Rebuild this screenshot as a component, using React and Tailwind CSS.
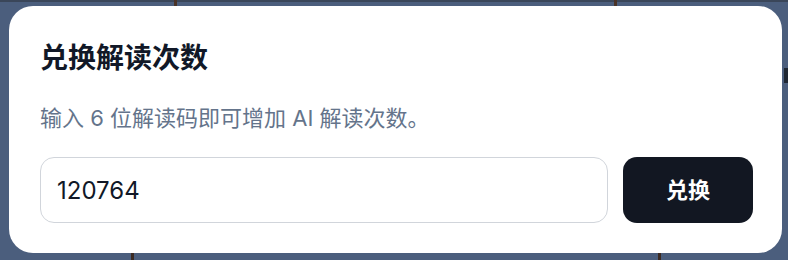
import React, { useState } from 'react';

const font = { fontFamily: '"Inter", "Noto Sans CJK SC", sans-serif' };

const RedeemDialog = () => {
  const [code, setCode] = useState('120764');

  return (
    <div className="w-[773px] h-[247px] bg-white rounded-[24px] pt-[34px] pl-[31px] pr-[29px] pb-[30px] flex flex-col">
      <h2 className="text-[28px] leading-[36px] font-bold text-[#111827]">兑换解读次数</h2>
      <p className="mt-[27px] text-[22px] leading-[30px] text-[#64748b]">
        输入 6 位解读码即可增加 AI 解读次数。
      </p>
      <div className="mt-[24px] flex gap-[15px]">
        <input
          value={code}
          onChange={(e) => setCode(e.target.value)}
          maxLength={6}
          className="flex-1 min-w-0 h-[66px] rounded-[14px] border border-[#d1d5db] px-[16px] text-[24px] text-[#111827] outline-none"
          style={font}
        />
        <button className="w-[130px] h-[66px] rounded-[14px] bg-[#121722] text-white text-[22px] font-bold">
          兑换
        </button>
      </div>
    </div>
  );
};

export default function App() {
  return (
    <div className="relative w-[788px] h-[260px] overflow-hidden bg-[#4b5e7d] pt-[6px] pl-[9px]" style={font}>
      {/* bits of the backdrop peeking around the dialog */}
      <div className="absolute left-0 top-0 w-full h-[2px] bg-[#3a4659]" />
      <div className="absolute left-[174px] top-0 w-[3px] h-[6px] bg-[#4a3326]" />
      <div className="absolute left-[614px] top-0 w-[3px] h-[6px] bg-[#4a3326]" />
      <div className="absolute left-[131px] top-[253px] w-[3px] h-[7px] bg-[#3b2a22]" />
      <div className="absolute left-[658px] top-[253px] w-[3px] h-[7px] bg-[#3b2a22]" />
      <div className="absolute left-[784px] top-[68px] w-[4px] h-[15px] bg-[#1f2733]" />
      <div className="relative">
        <RedeemDialog />
      </div>
    </div>
  );
}
